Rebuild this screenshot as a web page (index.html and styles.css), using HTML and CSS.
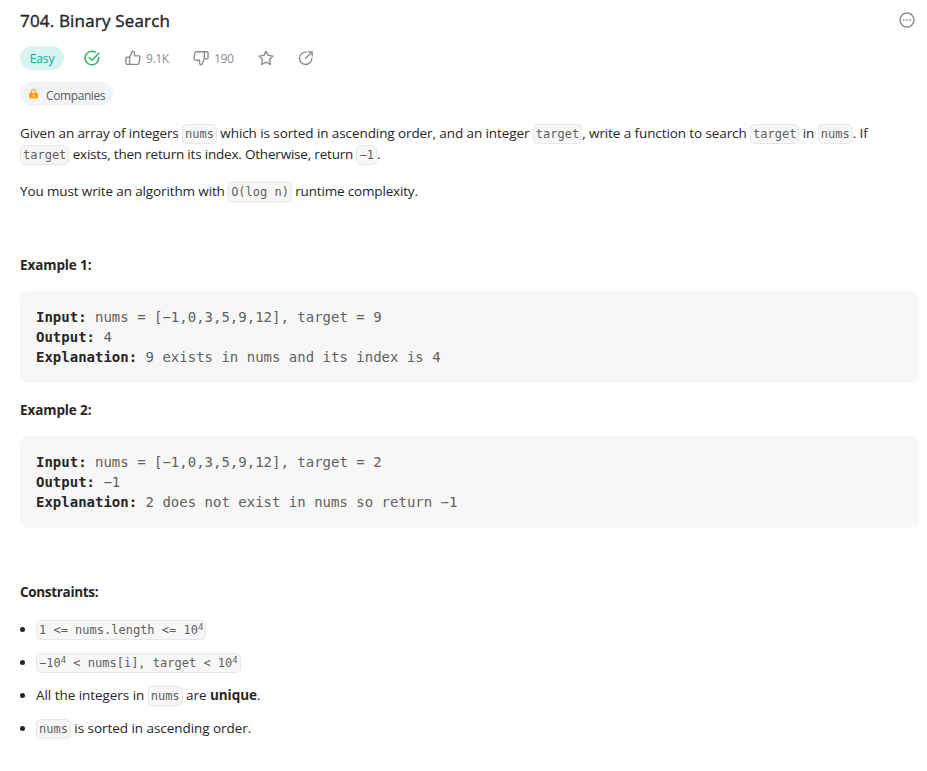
FILE: index.html
```html
<!DOCTYPE html>
<html lang="en">
<head>
<meta charset="utf-8">
<title>704. Binary Search</title>
<link rel="stylesheet" href="styles.css">
</head>
<body>
<main class="problem">
  <header class="head">
    <h1>704. Binary Search</h1>
    <svg class="more" viewBox="0 0 16 16"><circle cx="8" cy="8" r="7" fill="none" stroke="currentColor" stroke-width="1.4"/><path fill="currentColor" d="M4 7.200h1.600v1.600H4zM7.200 7.200h1.600v1.600H7.200zM10.400 7.200H12v1.600h-1.600z"/></svg>
  </header>
  <div class="stats">
    <span class="easy">Easy</span>
    <svg class="icon solved" viewBox="0 0 16 16"><path d="M14.700 7.500A6.800 6.800 0 1 1 11.300 2.100M5.200 7.500l2.800 2.800L14.800 3.200"/></svg>
    <span class="vote up"><svg class="icon" viewBox="0 0 16 16"><path d="M4.600 14.300V7.200L7.400 1.200C8.800 1.100 9.500 2 9.500 3.200v2.600h4.100c.9 0 1.600.8 1.400 1.700l-.9 5.500c-.1.8-.7 1.300-1.500 1.300H2.200c-.7 0-1.300-.6-1.300-1.300V8.500c0-.8.6-1.300 1.300-1.300h2.400"/></svg><span>9.1K</span></span>
    <span class="vote down"><svg class="icon flip" viewBox="0 0 16 16"><path d="M4.600 14.300V7.200L7.400 1.200C8.800 1.100 9.500 2 9.500 3.200v2.600h4.100c.9 0 1.600.8 1.400 1.700l-.9 5.500c-.1.8-.7 1.300-1.500 1.300H2.200c-.7 0-1.300-.6-1.300-1.300V8.500c0-.8.6-1.300 1.300-1.300h2.400"/></svg><span>190</span></span>
    <svg class="icon star" viewBox="0 0 16 16"><path d="M8 1.100l2.100 4.300 4.900.7-3.500 3.500.8 4.900L8 12.200l-4.300 2.300.8-4.900L1 6.100l4.900-.7z"/></svg>
    <svg class="icon share" viewBox="0 0 16 16"><path d="M8 2.100A6.200 6.200 0 1 0 13.900 8.500M7.500 8.500l6.300-6.300M10 1.800h4.200V6"/></svg>
  </div>
  <div class="tags"><span class="companies"><svg class="lock" viewBox="0 0 10 11"><path fill="none" stroke="currentColor" stroke-width="1.300" d="M2.700 5V3a2.300 2.300 0 0 1 4.600 0v2"/><path fill="currentColor" fill-rule="evenodd" d="M1.300 4h7.400c.8 0 1.300.5 1.300 1.300v3.900c0 .8-.5 1.300-1.300 1.300H1.300C.5 10.500 0 10 0 9.200V5.300C0 4.500.5 4 1.300 4zM5 6.200a1 1 0 1 0 0 2 1 1 0 0 0 0-2z"/></svg><span>Companies</span></span></div>
  <article class="content">
    <p><span class="t1">Given an array of integers </span><code>nums</code><span class="t2"> which is sorted in ascending order, and an integer </span><code>target</code><span class="t3">, write a function to search </span><code>target</code> in <code>nums</code>. If<br><code>target</code><span class="t4"> exists, then return its index. Otherwise, return </span><code>−1</code>.</p>
    <p><span class="t5">You must write an algorithm with </span><code>O(log n)</code><span class="t6"> runtime complexity.</span></p>
    <p>&nbsp;</p>
    <p><strong>Example 1:</strong></p>
    <pre><strong>Input:</strong> nums = [−1,0,3,5,9,12], target = 9
<strong>Output:</strong> 4
<strong>Explanation:</strong> 9 exists in nums and its index is 4</pre>
    <p><strong>Example 2:</strong></p>
    <pre><strong>Input:</strong> nums = [−1,0,3,5,9,12], target = 2
<strong>Output:</strong> −1
<strong>Explanation:</strong> 2 does not exist in nums so return −1</pre>
    <p>&nbsp;</p>
    <p class="constraints"><strong>Constraints:</strong></p>
    <ul>
      <li><code>1 &lt;= nums.length &lt;= 10<sup>4</sup></code></li>
      <li><code>−10<sup>4</sup> &lt; nums[i], target &lt; 10<sup>4</sup></code></li>
      <li>All the integers in <code>nums</code> are <strong>unique</strong>.</li>
      <li><code>nums</code> is sorted in ascending order.</li>
    </ul>
  </article>
</main>
</body>
</html>
```
FILE: styles.css
```css
* { box-sizing: border-box; }
body { margin: 0; background: #fff; color: #262626; font: 13.5px/21px "Open Sans", sans-serif; }
.problem { padding: 8px 8px 0 20px; }
.head { display: flex; justify-content: space-between; align-items: center; height: 24px; padding-right: 4px; }
h1 { margin: 0; font-size: 17px; font-weight: 400; line-height: 24px; padding-top: 2px; letter-spacing: 0.18px; -webkit-text-stroke: 0.4px #262626; }
.more { width: 16px; height: 16px; color: #8a8a8a; }
.stats { display: flex; align-items: center; height: 24px; margin-top: 14px; color: #8a8a8a; font-size: 12px; letter-spacing: -0.35px; }
.easy { width: 44px; height: 24px; border-radius: 12px; background: #d9f3f0; color: #00af9b; line-height: 25px; text-align: center; letter-spacing: -0.1px; }
.icon { display: block; flex: none; width: 16px; height: 16px; fill: none; stroke: currentColor; stroke-width: 1.35; stroke-linejoin: round; stroke-linecap: round; }
.solved { margin-left: 20px; color: #2db55d; stroke-width: 1.5; }
.vote { display: flex; align-items: center; gap: 5px; }
.up { width: 68px; margin-left: 25px; }
.down { width: 65px; }
.flip { transform: rotate(180deg); }
.share { margin-left: 24px; }
.tags { display: flex; margin-top: 12px; }
.companies { display: flex; align-items: center; gap: 8px; width: 93px; height: 24px; padding-left: 9px; border-radius: 12px; background: #f2f3f5; color: #5c5c5c; font-size: 12px; letter-spacing: -0.4px; }
.companies span { padding-top: 2px; }
.lock { width: 9px; height: 10px; color: #ffa116; }
.content { margin-top: 17px; }
p { margin: 0 0 16px; white-space: nowrap; letter-spacing: -0.1px; }
.t1 { letter-spacing: -0.13px; }
.t2 { letter-spacing: -0.09px; }
.t4 { letter-spacing: -0.2px; }
.t5 { letter-spacing: -0.13px; }
.t6 { letter-spacing: -0.17px; }
.constraints { letter-spacing: -0.32px; }
code, pre { font-family: "DejaVu Sans Mono", monospace; color: #616161; letter-spacing: 0; }
code { padding: 2px; border: 1px solid #e8e8e8; border-radius: 5px; background: #f7f7f7; font-size: 12px; line-height: 1; }
pre { width: 899px; margin: -1px 0 17px; padding: 16px; border-radius: 8px; background: #f7f7f7; font-size: 14px; line-height: 20px; }
strong { color: #262626; font-weight: 700; }
ul { margin: 0; padding-left: 16px; }
li { height: 21px; margin-bottom: 12px; letter-spacing: -0.05px; }
sup { position: relative; top: -4px; font-size: 9px; line-height: 0; vertical-align: baseline; }
```
